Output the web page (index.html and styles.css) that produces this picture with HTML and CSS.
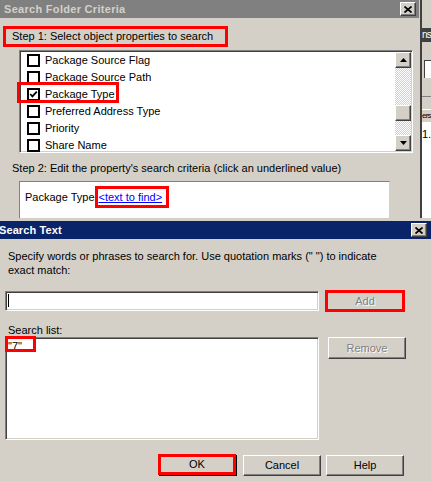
FILE: index.html
```html
<!DOCTYPE html>
<html>
<head>
<meta charset="utf-8">
<title>Search Folder Criteria</title>
<link rel="stylesheet" href="styles.css">
</head>
<body>
<div class="screen">
  <div class="top">
    <div class="dlg1">
      <div class="tb tb-inactive">
        <span class="tb-title">Search Folder Criteria</span>
        <span class="closebtn"><svg width="8" height="7" viewBox="0 0 8 7"><path d="M0.5 0.5 L7.5 6.5 M7.5 0.5 L0.5 6.5" stroke="#000" stroke-width="1.7" fill="none"/></svg></span>
      </div>
      <div class="d1body">
        <div class="step1 hl">Step 1: Select object properties to search</div>
        <div class="plist sunken">
          <div class="rows">
            <div class="row"><span class="cb"></span>Package Source Flag</div>
            <div class="row"><span class="cb"></span>Package Source Path</div>
            <div class="row"><span class="cb"><svg width="9" height="9" viewBox="0 0 9 9"><path d="M1.2 4 L3.4 6.4 L7.8 1.6" stroke="#000" stroke-width="1.8" fill="none"/></svg></span>Package Type<span class="rowmark"></span></div>
            <div class="row"><span class="cb"></span>Preferred Address Type</div>
            <div class="row"><span class="cb"></span>Priority</div>
            <div class="row"><span class="cb"></span>Share Name</div>
          </div>
          <div class="vscroll">
            <div class="sbtn raised"><svg width="7" height="4" viewBox="0 0 7 4"><polygon points="3.5,0 7,4 0,4" fill="#000"/></svg></div>
            <div class="track"><div class="thumb raised"></div></div>
            <div class="sbtn raised"><svg width="7" height="4" viewBox="0 0 7 4"><polygon points="0,0 7,0 3.5,4" fill="#000"/></svg></div>
          </div>
        </div>
        <div class="step2">Step 2: Edit the property's search criteria (click an underlined value)</div>
        <div class="crit">
          <div class="critrow"><span>Package Type</span><span class="linkbox hl"><a class="link">&lt;text to find&gt;</a></span></div>
        </div>
      </div>
    </div>
    <div class="bgwin">
      <div class="bg-gap1"></div>
      <div class="bg-dark">ns</div>
      <div class="bg-gap2"></div>
      <div class="bg-field"></div>
      <div class="bg-gap3"></div>
      <div class="bg-gap4"></div>
      <div class="bg-head">ers</div>
      <div class="bg-list">1.</div>
    </div>
  </div>
  <div class="dlg2">
    <div class="tb tb-active">
      <span class="tb-title2">Search Text</span>
      <span class="closebtn"><svg width="8" height="7" viewBox="0 0 8 7"><path d="M0.5 0.5 L7.5 6.5 M7.5 0.5 L0.5 6.5" stroke="#000" stroke-width="1.7" fill="none"/></svg></span>
    </div>
    <div class="d2body">
      <div class="intro">Specify words or phrases to search for. Use quotation marks (" ") to indicate<br>exact match:</div>
      <div class="inrow">
        <div class="input"><span class="caret"></span></div>
        <div class="btn addbtn hl"><span class="disabled">Add</span></div>
      </div>
      <div class="listlabel">Search list:</div>
      <div class="lrow">
        <div class="slist">"7"<span class="mark7"></span></div>
        <div class="btn raised removebtn"><span class="disabled">Remove</span></div>
      </div>
      <div class="brow">
        <div class="btn okbtn hl">OK</div>
        <div class="btn raised cancelbtn">Cancel</div>
        <div class="btn raised helpbtn">Help</div>
      </div>
    </div>
  </div>
</div>
</body>
</html>
```
FILE: styles.css
```css
* { box-sizing: border-box; }
html, body { margin: 0; padding: 0; }
body { background: #d4d0c8; }

.screen {
  width: 431px;
  height: 481px;
  overflow: hidden;
  background: #d4d0c8;
  font-family: "Liberation Sans", Arial, sans-serif;
  font-size: 11px;
  line-height: 13px;
  color: #000;
}

.top { display: flex; height: 218px; overflow: hidden; }

.dlg1 { width: 419px; flex: none; background: #d4d0c8; }

.tb {
  height: 18px;
  display: flex;
  align-items: center;
  justify-content: space-between;
  font-weight: bold;
  white-space: nowrap;
}
.tb-inactive { background: #808080; color: #d4d0c8; padding: 0 3px 0 4px; }
.tb-title { letter-spacing: 0.3px; }
.tb-active { background: #0a246a; color: #fff; padding: 0 4px 0 0; }
.tb-title2 { margin-left: -1px; letter-spacing: 0.1px; }

.closebtn {
  width: 16px;
  height: 14px;
  flex: none;
  display: flex;
  align-items: center;
  justify-content: center;
  background: #d4d0c8;
  border: 1px solid;
  border-color: #fff #404040 #404040 #fff;
  box-shadow: inset -1px -1px #808080;
}

.hl { border: 3px solid #ff0000; }

.d1body { padding: 8px 0 0 3px; }
.step1 { width: 225px; height: 21px; padding-left: 6px; line-height: 15px; white-space: nowrap; }

.sunken {
  border: 1px solid;
  border-color: #808080 #fff #fff #808080;
  box-shadow: inset 1px 1px #404040, inset -1px -1px #d4d0c8;
  padding: 1px;
  background: #fff;
}
.raised {
  background: #d4d0c8;
  border: 1px solid;
  border-color: #fff #404040 #404040 #fff;
  box-shadow: inset -1px -1px #808080;
}

.plist { margin: 3px 0 0 16px; width: 394px; height: 103px; display: flex; }
.rows { flex: 1; height: 99px; }
.row {
  position: relative;
  height: 17px;
  display: flex;
  align-items: center;
  padding-left: 6px;
  white-space: nowrap;
}
.cb {
  width: 13px;
  height: 13px;
  flex: none;
  border: 2px solid #000;
  background: #fff;
  margin-right: 5px;
  display: flex;
  align-items: center;
  justify-content: center;
}
.rowmark {
  position: absolute;
  left: -4px;
  top: -4px;
  width: 102px;
  height: 21px;
  border: 3px solid #ff0000;
}

.vscroll {
  width: 16px;
  flex: none;
  display: flex;
  flex-direction: column;
  background-color: #d4d0c8;
  background-image: repeating-conic-gradient(#fff 0 25%, #d4d0c8 0 50%);
  background-size: 2px 2px;
}
.sbtn { height: 16px; display: flex; align-items: center; justify-content: center; }
.track { flex: 1; }
.thumb { margin-top: 37px; height: 16px; }

.step2 { margin: 9px 0 0 9px; white-space: nowrap; }
.crit {
  margin: 6px 0 0 16px;
  width: 371px;
  height: 60px;
  background: #fff;
  border: 1px solid;
  border-color: #808080 #d4d0c8 #d4d0c8 #808080;
  padding: 4px 0 0 5px;
}
.critrow { display: flex; align-items: center; height: 22px; white-space: nowrap; }
.linkbox { height: 22px; padding: 0 4px 0 1px; line-height: 16px; }
.link { color: #0000ff; text-decoration: underline; }

.bgwin {
  width: 11px;
  margin-left: 1px;
  flex: none;
  border-left: 2px solid #404040;
  display: flex;
  flex-direction: column;
  overflow: hidden;
  white-space: nowrap;
}
.bg-gap1 { height: 28px; }
.bg-dark { height: 14px; background: #404040; color: #fff; line-height: 14px; font-size: 10px; letter-spacing: -0.7px; }
.bg-gap2 { height: 18px; }
.bg-field { height: 18px; margin-left: 2px; background: #fff; border-top: 1px solid #404040; border-left: 1px solid #404040; }
.bg-gap3 { height: 19px; border-bottom: 1px solid #808080; }
.bg-gap4 { height: 13px; border-bottom: 1px solid #fff; }
.bg-head { height: 12px; line-height: 12px; font-size: 8px; letter-spacing: -0.8px; }
.bg-list { flex: 1; background: #fff; padding-top: 7px; line-height: 10px; }

.dlg2 { height: 263px; padding-top: 3px; background: #d4d0c8; }
.d2body { padding-left: 5px; }
.intro { margin: 10px 0 0 3px; line-height: 14px; white-space: nowrap; }

.inrow { display: flex; align-items: flex-start; margin-top: 13px; }
.input {
  width: 314px;
  height: 20px;
  margin-top: 1px;
  border: 1px solid;
  border-color: #808080 #fff #fff #808080;
  box-shadow: inset 1px 1px #404040, inset -1px -1px #d4d0c8;
  background: #fff;
  padding: 2px 0 0 2px;
}
.caret { display: block; width: 1px; height: 13px; background: #000; }

.btn {
  height: 22px;
  display: flex;
  align-items: center;
  justify-content: center;
  flex: none;
  white-space: nowrap;
}
.addbtn { margin-left: 6px; width: 80px; background: #d4d0c8; }
.disabled { color: #808080; text-shadow: 1px 1px 0 #fff; }

.listlabel { margin: 12px 0 0 3px; }
.lrow { display: flex; align-items: flex-start; }
.slist {
  position: relative;
  width: 314px;
  height: 103px;
  border: 1px solid;
  border-color: #808080 #fff #fff #808080;
  box-shadow: inset 1px 1px #404040, inset -1px -1px #d4d0c8;
  background: #fff;
  padding: 1px 2px;
  line-height: 14px;
}
.mark7 {
  position: absolute;
  left: -1px;
  top: -2px;
  width: 31px;
  height: 16px;
  border: 3px solid #ff0000;
}
.removebtn { margin-left: 9px; width: 78px; }

.brow { display: flex; align-items: flex-start; margin-top: 14px; }
.okbtn { margin-left: 153px; width: 78px; height: 21px; background: #d4d0c8; box-shadow: 1px 1px 0 #000; }
.cancelbtn { margin: 1px 0 0 7px; width: 78px; height: 21px; }
.helpbtn { margin: 1px 0 0 5px; width: 78px; height: 21px; }
```
